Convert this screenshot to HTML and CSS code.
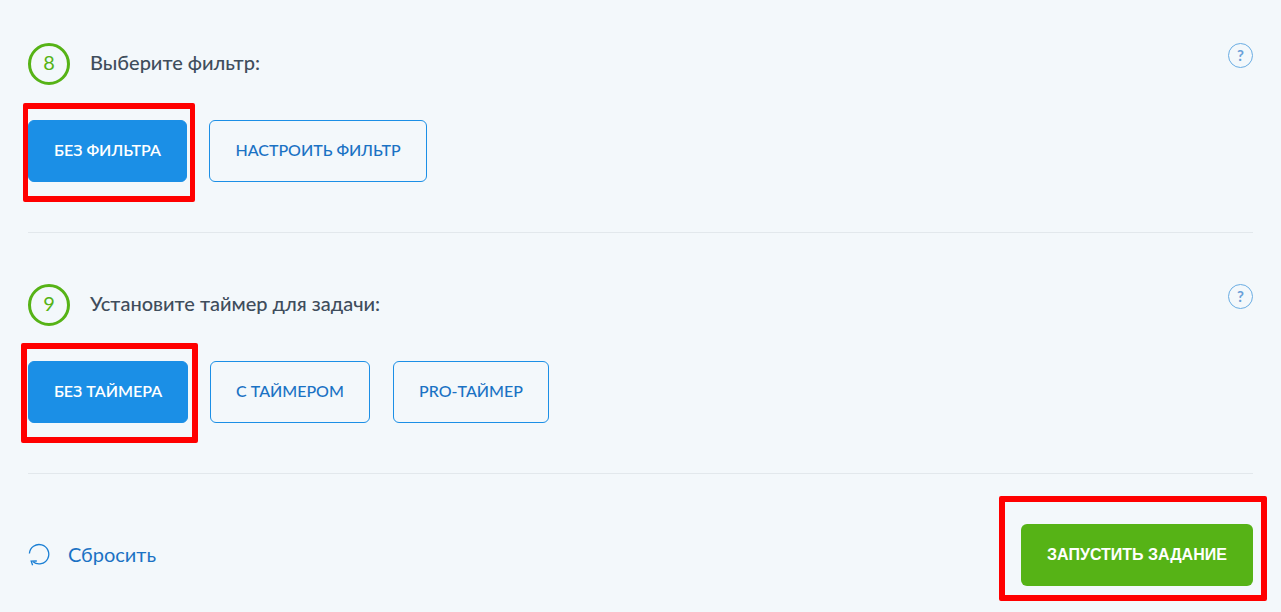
FILE: index.html
```html
<!DOCTYPE html>
<html lang="ru">
<head>
  <meta charset="UTF-8">
  <meta name="viewport" content="width=device-width, initial-scale=1.0">
  <title>Запуск задания</title>
  <link rel="stylesheet" href="styles.css">
</head>
<body>
  <main class="page">
    <section class="step step-filter">
      <div class="step-head">
        <span class="step-num">8</span>
        <h2>Выберите фильтр:</h2>
        <span class="help">?</span>
      </div>
      <div class="options">
        <div class="marked mark-filter"><button class="btn btn-active btn-w159">БЕЗ ФИЛЬТРА</button></div>
        <button class="btn btn-w218 gap-filter">НАСТРОИТЬ ФИЛЬТР</button>
      </div>
    </section>

    <section class="step step-timer">
      <div class="step-head">
        <span class="step-num">9</span>
        <h2>Установите таймер для задачи:</h2>
        <span class="help">?</span>
      </div>
      <div class="options">
        <div class="marked mark-timer"><button class="btn btn-active btn-w160">БЕЗ ТАЙМЕРА</button></div>
        <button class="btn btn-w160 gap-timer">С ТАЙМЕРОМ</button>
        <button class="btn btn-w156 gap-pro">PRO-ТАЙМЕР</button>
      </div>
    </section>

    <footer class="actions">
      <a class="reset" href="#">
        <svg class="reset-icon" width="22" height="24" viewBox="0 0 22 24" fill="none" stroke="#1a7fd4" stroke-width="1.3">
          <path d="M1.4 11.5A9.7 9.7 0 1 1 5 19.8"/>
          <path d="M8.8 19 3.2 19.2l1.4 4"/>
        </svg>
        Сбросить
      </a>
      <div class="marked mark-run"><button class="btn-run">ЗАПУСТИТЬ ЗАДАНИЕ</button></div>
    </footer>
  </main>
</body>
</html>
```

FILE: styles.css
```css
body {
  margin: 0;
  background-color: #f3f8fb;
  font-family: Lato, "Open Sans", sans-serif;
  color: #3f4d5c;
}

.page {
  padding: 43px 28px 0;
  height: 569px;
  overflow: hidden;
}

.step {
  border-bottom: 1px solid #e2e8ec;
  height: 189px;
}

.step-timer {
  margin-top: 51px;
}

.step-head {
  display: flex;
  align-items: center;
  height: 42px;
}

.step-num {
  box-sizing: border-box;
  width: 42px;
  height: 42px;
  border: 3px solid #56b316;
  border-radius: 50%;
  color: #56b316;
  font-size: 20px;
  line-height: 32px;
  text-align: center;
}

h2 {
  flex: 1;
  margin: 0 0 4px 20px;
  font-size: 20px;
  font-weight: 500;
}

.help {
  box-sizing: border-box;
  align-self: flex-start;
  width: 25px;
  height: 25px;
  border: 1px solid #6aade3;
  border-radius: 50%;
  color: #6aa0d8;
  font-size: 15px;
  font-weight: 700;
  line-height: 22px;
  text-align: center;
}

.options {
  display: flex;
  margin-top: 35px;
}

.btn {
  box-sizing: border-box;
  height: 62px;
  padding: 0 0 4px;
  background: transparent;
  border: 1px solid #1b8fe6;
  border-radius: 6px;
  color: #1a72c4;
  font-family: inherit;
  font-size: 16px;
  font-weight: 500;
}

.btn-active {
  background: #1b8fe6;
  color: white;
  font-weight: 600;
}

.btn-w159 {
  width: 159px;
}

.btn-w160 {
  width: 160px;
}

.btn-w218 {
  width: 218px;
}

.btn-w156 {
  width: 156px;
}

.gap-filter {
  margin-left: 22px;
}

.gap-timer {
  margin-left: 22px;
}

.gap-pro {
  margin-left: 23px;
}

.actions {
  display: flex;
  justify-content: space-between;
  align-items: center;
  margin-top: 50px;
}

.reset {
  display: flex;
  align-items: center;
  gap: 18px;
  padding-bottom: 2px;
  color: #1a72c4;
  font-size: 20px;
  text-decoration: none;
}

.btn-run {
  display: block;
  width: 232px;
  height: 62px;
  padding: 0;
  background: #56b316;
  border: none;
  border-radius: 6px;
  color: white;
  font-family: "Liberation Sans", Arial, sans-serif;
  font-size: 16px;
  font-weight: 700;
}

/* красные рамки поверх кнопок */
.marked {
  position: relative;
}

.marked::after {
  content: "";
  position: absolute;
  border: 6px solid #ff0000;
  border-radius: 2px;
}

.mark-filter::after {
  inset: -17px -8px -20px -5px;
  border-width: 6px 5px;
}

.mark-timer::after {
  inset: -18px -10px -20px -7px;
}

.mark-run::after {
  inset: -28px -14px -15px -22px;
}
```
